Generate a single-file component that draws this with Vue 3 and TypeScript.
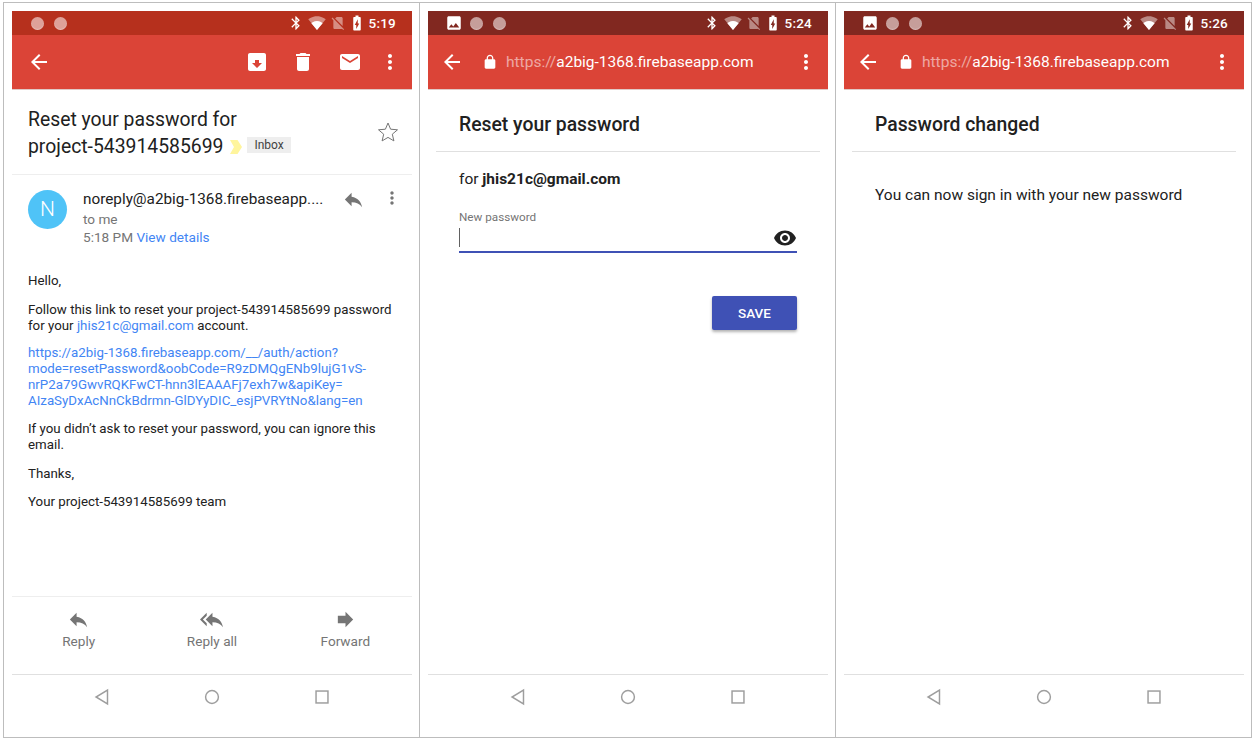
<script setup lang="ts">
const icons = {
  back: "M20 11H7.83l5.59-5.59L12 4l-8 8 8 8 1.41-1.41L7.83 13H20v-2z",
  more: "M12 8c1.1 0 2-.9 2-2s-.9-2-2-2-2 .9-2 2 .9 2 2 2zm0 2c-1.1 0-2 .9-2 2s.9 2 2 2 2-.9 2-2-.9-2-2-2zm0 6c-1.1 0-2 .9-2 2s.9 2 2 2 2-.9 2-2-.9-2-2-2z",
  bluetooth: "M17.71 7.71L12 2h-1v7.59L6.41 5 5 6.41 10.59 12 5 17.59 6.41 19 11 14.41V22h1l5.71-5.71-4.3-4.29 4.3-4.29zM13 5.83l1.88 1.88L13 9.59V5.83zm1.88 10.46L13 18.17v-3.76l1.88 1.88z",
  wifi: "M12.01 21.49L23.64 7c-.45-.34-4.93-4-11.64-4C5.28 3 .81 6.66.36 7l11.63 14.49.01.01.01-.01z",
  wifiInner: "M12.01 21.49L19.5 12.2c-.4-.3-3.3-3-7.5-3s-7.1 2.7-7.5 3l7.49 9.29.01.01.01-.01z",
  sim: "M18.99 5c0-1.1-.89-2-1.99-2h-7L7.66 5.34 19 16.68 18.99 5zM3.65 3.88L2.38 5.15 5 7.77V19c0 1.1.9 2 2 2h10.01c.35 0 .67-.1.96-.26l1.88 1.88 1.27-1.27L3.65 3.88z",
  battery: "M15.67 4H14V2h-4v2H8.33C7.6 4 7 4.6 7 5.33v15.33C7 21.4 7.6 22 8.33 22h7.33c.74 0 1.34-.6 1.34-1.33V5.33C17 4.6 16.4 4 15.67 4zM11 20v-5.5H9L13 7v5.5h2L11 20z",
  image: "M21 19V5c0-1.1-.9-2-2-2H5c-1.1 0-2 .9-2 2v14c0 1.1.9 2 2 2h14c1.1 0 2-.9 2-2zM8.5 13.5l2.5 3.01L14.5 12l4.5 6H5l3.5-4.5z",
  archive: "M19 3H5c-1.1 0-2 .9-2 2v14c0 1.1.9 2 2 2h14c1.1 0 2-.9 2-2V5c0-1.1-.9-2-2-2zm-7 15l-5-5h3v-3h4v3h3l-5 5z",
  trash: "M6 19c0 1.1.9 2 2 2h8c1.1 0 2-.9 2-2V7H6v12zM19 4h-3.5l-1-1h-5l-1 1H5v2h14V4z",
  mail: "M20 4H4c-1.1 0-1.99.9-1.99 2L2 18c0 1.1.9 2 2 2h16c1.1 0 2-.9 2-2V6c0-1.1-.9-2-2-2zm0 4l-8 5-8-5V6l8 5 8-5v2z",
  star: "M12 3l2.6 6.2 6.9.6-5.2 4.4 1.6 6.7-5.9-3.5-5.9 3.5 1.6-6.7-5.2-4.4 6.9-.6z",
  reply: "M10 9V5l-7 7 7 7v-4.1c5 0 8.5 1.6 11 5.1-1-5-4-10-11-11z",
  replyAll: "M7 8V5l-7 7 7 7v-3l-4-4 4-4zm6 1V5l-7 7 7 7v-4.1c5 0 8.5 1.6 11 5.1-1-5-4-10-11-11z",
  forward: "M12 8V4l8 8-8 8v-4H4V8z",
  eye: "M12 4.5C7 4.5 2.73 7.61 1 12c1.73 4.39 6 7.5 11 7.5s9.27-3.11 11-7.5c-1.73-4.39-6-7.5-11-7.5zM12 17c-2.76 0-5-2.24-5-5s2.24-5 5-5 5 2.24 5 5-2.24 5-5 5zm0-8c-1.66 0-3 1.34-3 3s1.34 3 3 3 3-1.34 3-3-1.34-3-3-3z",
  lock: "M18 8h-1V6c0-2.76-2.24-5-5-5S7 3.24 7 6v2H6c-1.1 0-2 .9-2 2v10c0 1.1.9 2 2 2h12c1.1 0 2-.9 2-2V10c0-1.1-.9-2-2-2zM15.1 8H8.9V6c0-1.71 1.39-3.1 3.1-3.1 1.71 0 3.1 1.39 3.1 3.1v2z",
};

const screens = [
  { id: "mail", time: "5:19", photo: false },
  { id: "reset", time: "5:24", photo: true },
  { id: "done", time: "5:26", photo: true },
];

const mailActions = [
  { label: "Reply", icon: icons.reply },
  { label: "Reply all", icon: icons.replyAll },
  { label: "Forward", icon: icons.forward },
];
</script>

<template>
  <div class="page">
    <section v-for="s in screens" :key="s.id" class="panel">
      <div class="phone">
        <div class="status" :class="{ dark: s.photo }">
          <svg v-if="s.photo" class="st-photo" viewBox="0 0 24 24"><path :d="icons.image" /></svg>
          <span class="dot"></span>
          <span class="dot"></span>
          <span class="spacer"></span>
          <svg class="st-icon bt" viewBox="0 0 24 24"><path :d="icons.bluetooth" /></svg>
          <svg class="st-icon wifi" viewBox="0 0 24 24">
            <path :d="icons.wifi" opacity="0.45" />
            <path :d="icons.wifiInner" />
          </svg>
          <svg class="st-icon sim" viewBox="0 0 24 24"><path :d="icons.sim" opacity="0.45" /></svg>
          <svg class="st-icon batt" viewBox="0 0 24 24"><path :d="icons.battery" /></svg>
          <span class="clock">{{ s.time }}</span>
        </div>

        <header class="toolbar" :class="{ browser: s.id !== 'mail' }">
          <svg class="tb-back" viewBox="0 0 24 24"><path :d="icons.back" /></svg>
          <template v-if="s.id === 'mail'">
            <span class="spacer"></span>
            <svg class="tb-action" viewBox="0 0 24 24"><path :d="icons.archive" /></svg>
            <svg class="tb-action" viewBox="0 0 24 24"><path :d="icons.trash" /></svg>
            <svg class="tb-action" viewBox="0 0 24 24"><path :d="icons.mail" /></svg>
          </template>
          <template v-else>
            <svg class="tb-lock" viewBox="0 0 24 24"><path :d="icons.lock" /></svg>
            <span class="url"><span class="scheme">https://</span>a2big-1368.firebaseapp.com</span>
            <span class="spacer"></span>
          </template>
          <svg class="tb-more" viewBox="0 0 24 24"><path :d="icons.more" /></svg>
        </header>

        <main v-if="s.id === 'mail'" class="content">
          <div class="subject">
            <h1>Reset your password for<br />project-543914585699<svg class="marker" viewBox="0 0 14 14"><path d="M1 0h7.5L13 7l-4.5 7H1l4-7z" /></svg><span class="tag">Inbox</span></h1>
            <svg class="star" viewBox="0 0 24 24"><path :d="icons.star" /></svg>
          </div>
          <div class="sender">
            <div class="avatar">N</div>
            <div class="sender-info">
              <div class="from">noreply@a2big-1368.firebaseapp....</div>
              <div class="meta">to me</div>
              <div class="meta">5:18 PM <a class="link">View details</a></div>
            </div>
            <svg class="sender-reply" viewBox="0 0 24 24"><path :d="icons.reply" /></svg>
            <svg class="sender-more" viewBox="0 0 24 24"><path :d="icons.more" /></svg>
          </div>
          <div class="body">
            <p>Hello,</p>
            <p>Follow this link to reset your project-543914585699 password<br />for your <a class="link">jhis21c@gmail.com</a> account.</p>
            <p class="url-block"><a class="link">https://a2big-1368.firebaseapp.com/__/auth/action?<br />mode=resetPassword&amp;oobCode=R9zDMQgENb9lujG1vS-<br />nrP2a79GwvRQKFwCT-hnn3lEAAAFj7exh7w&amp;apiKey=<br />AIzaSyDxAcNnCkBdrmn-GlDYyDIC_esjPVRYtNo&amp;lang=en</a></p>
            <p>If you didn’t ask to reset your password, you can ignore this<br />email.</p>
            <p>Thanks,</p>
            <p>Your project-543914585699 team</p>
          </div>
          <div class="spacer"></div>
          <div class="actions">
            <div v-for="a in mailActions" :key="a.label" class="action">
              <svg viewBox="0 0 24 24"><path :d="a.icon" /></svg>
              <span>{{ a.label }}</span>
            </div>
          </div>
        </main>

        <main v-else class="content">
          <h2 class="card-title">{{ s.id === "reset" ? "Reset your password" : "Password changed" }}</h2>
          <div v-if="s.id === 'reset'" class="form">
            <div class="for-line">for <b>jhis21c@gmail.com</b></div>
            <label class="field-label">New password</label>
            <div class="field">
              <span class="caret"></span>
              <svg viewBox="0 0 24 24"><path :d="icons.eye" /></svg>
            </div>
            <div class="form-actions"><button class="save">SAVE</button></div>
          </div>
          <p v-else class="done-text">You can now sign in with your new password</p>
        </main>

        <nav class="navbar">
          <svg viewBox="0 0 24 24"><path d="M18 4.5v15L5.5 12z" /></svg>
          <svg viewBox="0 0 24 24"><circle cx="12" cy="12" r="7" /></svg>
          <svg viewBox="0 0 24 24"><rect x="5.5" y="5.5" width="13" height="13" /></svg>
        </nav>
      </div>
    </section>
  </div>
</template>

<style scoped>
.page {
  display: flex;
  width: 1249px;
  height: 736px;
  margin: 2px 0 0 3px;
  border: 1px solid #bdbdbd;
  border-left: 0;
  box-sizing: border-box;
  background: #fff;
  font-family: Roboto, "Liberation Sans", sans-serif;
  color: #212121;
}

.panel {
  width: 416px;
  box-sizing: border-box;
  border-left: 1px solid #bdbdbd;
  padding: 8px 7px 9px 8px;
}

.phone {
  width: 400px;
  height: 717px;
  display: flex;
  flex-direction: column;
}

.spacer {
  flex: 1;
}

.status {
  height: 24px;
  flex: none;
  display: flex;
  align-items: center;
  background: #b6301d;
  padding: 0 16px 0 19px;
  box-sizing: border-box;
  color: #fff;
}

.status.dark {
  background: #812820;
  padding-left: 17px;
}

.st-photo {
  width: 18px;
  height: 18px;
  fill: #fff;
  margin-right: 7px;
}

.dot {
  width: 13px;
  height: 13px;
  border-radius: 50%;
  background: rgba(255, 255, 255, 0.55);
  box-shadow: inset 0 -1px 1px rgba(255, 255, 255, 0.3);
  margin-right: 10px;
}

.st-icon {
  fill: #fff;
  flex: none;
}

.bt {
  width: 16px;
  height: 16px;
  margin-right: 3.5px;
}

.wifi {
  width: 18px;
  height: 18px;
  margin-right: 4.5px;
}

.sim {
  width: 16px;
  height: 16px;
  margin-right: 2px;
}

.batt {
  width: 18px;
  height: 18px;
  margin-right: 2.5px;
}

.clock {
  font-size: 13.5px;
  font-weight: 500;
  letter-spacing: 0.2px;
}

.toolbar {
  height: 55px;
  flex: none;
  display: flex;
  align-items: center;
  background: #db4437;
  border-bottom: 1px solid #e0c9c6;
  box-sizing: border-box;
  padding: 0 10px 0 15px;
}

.toolbar.browser {
  padding-left: 12px;
}

.toolbar svg {
  fill: #fff;
  flex: none;
}

.tb-back {
  width: 24px;
  height: 24px;
}

.tb-lock {
  width: 16px;
  height: 16px;
  margin-left: 18px;
}

.url {
  margin-left: 8px;
  font-size: 15.5px;
  color: #fff;
  white-space: nowrap;
}

.scheme {
  color: rgba(255, 255, 255, 0.55);
}

.tb-action {
  width: 24px;
  height: 24px;
  margin-right: 22.5px;
}

.tb-action:nth-last-of-type(2) {
  margin-right: 16.5px;
}

.tb-more {
  width: 24px;
  height: 24px;
}

.content {
  flex: 1;
  display: flex;
  flex-direction: column;
  min-height: 0;
}

.subject {
  display: flex;
  justify-content: space-between;
  align-items: center;
  padding: 16px 12px 14px 16px;
  border-bottom: 1px solid #eeeeee;
}

.subject h1 {
  margin: 0;
  font-size: 19.35px;
  font-weight: 400;
  line-height: 27px;
  color: #212121;
}

.marker {
  width: 14px;
  height: 14px;
  fill: #fff59d;
  margin: 0 4px 0 6px;
  vertical-align: -1px;
}

.tag {
  display: inline-block;
  background: #eeeeee;
  font-size: 12px;
  line-height: 16px;
  padding: 0 7px;
  vertical-align: 4px;
  color: #424242;
}

.star {
  width: 24px;
  height: 24px;
  margin-bottom: 3px;
  fill: none;
  stroke: #757575;
  stroke-width: 1;
}

.sender {
  display: flex;
  align-items: flex-start;
  padding: 15px 8px 0 16px;
}

.avatar {
  width: 39px;
  height: 39px;
  border-radius: 50%;
  background: #4fc3f7;
  color: #fff;
  font-size: 21px;
  font-weight: 300;
  line-height: 39px;
  text-align: center;
  flex: none;
}

.sender-info {
  margin-left: 16px;
  flex: 1;
}

.from {
  font-size: 15.3px;
  line-height: 18px;
  margin-bottom: 2px;
}

.meta {
  font-size: 13.6px;
  line-height: 18px;
  color: #757575;
}

.link {
  color: #4285f4;
}

.sender-reply {
  width: 23px;
  height: 23px;
  fill: #757575;
  margin: -2px 17px 0 0;
}

.sender-more {
  width: 20px;
  height: 20px;
  fill: #757575;
  margin: -2px 2px 0 0;
}

.body {
  padding: 0 16px;
  margin-top: 27px;
  font-size: 13.3px;
  line-height: 16px;
}

.body p {
  margin: 0 0 12.4px;
}

.body p:first-child {
  margin-bottom: 13.4px;
}

.body .url-block {
  margin-top: -2px;
}

.actions {
  height: 78px;
  flex: none;
  display: flex;
  border-top: 1px solid #eeeeee;
  box-sizing: border-box;
}

.action {
  flex: 1;
  display: flex;
  flex-direction: column;
  align-items: center;
  padding-top: 11px;
  font-size: 13.6px;
  line-height: 16px;
  color: #757575;
}

.action svg {
  width: 23px;
  height: 23px;
  fill: #757575;
  margin-bottom: 2px;
}

.card-title {
  margin: 0 8px;
  padding: 22px 23px 13px;
  font-size: 19.35px;
  line-height: 26px;
  font-weight: 500;
  border-bottom: 1px solid #e0e0e0;
}

.form {
  padding: 18px 31px 0;
}

.for-line {
  font-size: 15.5px;
  line-height: 18px;
}

.for-line b {
  font-weight: 700;
}

.field-label {
  display: block;
  margin-top: 22px;
  font-size: 11.7px;
  line-height: 14px;
  color: #757575;
}

.field {
  height: 27px;
  display: flex;
  align-items: center;
  justify-content: space-between;
  border-bottom: 2px solid #3f51b5;
}

.field svg {
  width: 24px;
  height: 24px;
  fill: #212121;
}

.caret {
  width: 1px;
  height: 19px;
  background: #616161;
}

.form-actions {
  display: flex;
  justify-content: flex-end;
  margin-top: 43px;
}

.save {
  width: 85px;
  height: 34px;
  border: 0;
  border-radius: 2px;
  background: #3f51b5;
  color: #fff;
  font: 500 13.5px Roboto, sans-serif;
  box-shadow: 0 2px 3px rgba(0, 0, 0, 0.3);
}

.done-text {
  margin: 0;
  padding: 33px 31px 0;
  font-size: 15.5px;
  line-height: 20px;
}

.navbar {
  height: 54px;
  flex: none;
  display: flex;
  align-items: center;
  border-top: 1px solid #e0e0e0;
  box-sizing: border-box;
  padding: 0 79px 9px;
  justify-content: space-between;
}

.navbar svg {
  width: 22px;
  height: 22px;
  fill: none;
  stroke: #9e9e9e;
  stroke-width: 1.6;
}
</style>

<style>
body {
  background: #fff;
}
</style>
